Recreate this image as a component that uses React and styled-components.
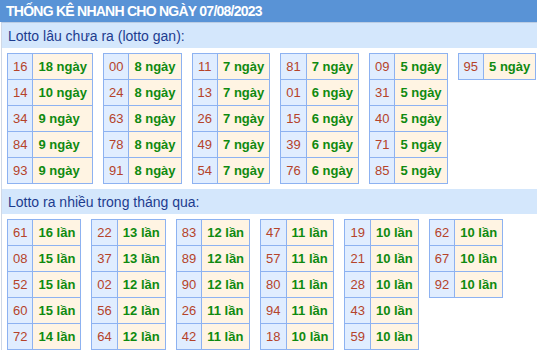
import React from 'react';
import styled, { createGlobalStyle } from 'styled-components';

const gan = [
  [['16', '18'], ['14', '10'], ['34', '9'], ['84', '9'], ['93', '9']],
  [['00', '8'], ['24', '8'], ['63', '8'], ['78', '8'], ['91', '8']],
  [['11', '7'], ['13', '7'], ['26', '7'], ['49', '7'], ['54', '7']],
  [['81', '7'], ['01', '6'], ['15', '6'], ['39', '6'], ['76', '6']],
  [['09', '5'], ['31', '5'], ['40', '5'], ['71', '5'], ['85', '5']],
  [['95', '5']],
];

const nhieu = [
  [['61', '16'], ['08', '15'], ['52', '15'], ['60', '15'], ['72', '14']],
  [['22', '13'], ['37', '13'], ['02', '12'], ['56', '12'], ['64', '12']],
  [['83', '12'], ['89', '12'], ['90', '12'], ['26', '11'], ['42', '11']],
  [['47', '11'], ['57', '11'], ['80', '11'], ['94', '11'], ['18', '10']],
  [['19', '10'], ['21', '10'], ['28', '10'], ['43', '10'], ['59', '10']],
  [['62', '10'], ['67', '10'], ['92', '10']],
];

const GlobalStyle = createGlobalStyle`
  body {
    margin: 0;
    background: #fff;
    font-family: "Liberation Sans", Arial, sans-serif;
  }
`;

const Title = styled.div`
  height: 22px;
  line-height: 22px;
  padding-left: 6px;
  background: #5993d6;
  color: #fff;
  font-size: 14px;
  font-weight: bold;
  letter-spacing: -0.75px;
  white-space: nowrap;
`;

const Content = styled.div`
  margin-left: 1px;
  border-left: 1px solid #cfd8e6;
  border-top: 1px solid #bccde3;
`;

const Heading = styled.div`
  height: 25px;
  line-height: 26px;
  margin-top: ${p => p.$gap || 0}px;
  padding-left: 6px;
  background: #d4e7fc;
  color: #1d3c8f;
  font-size: 14px;
`;

const Tables = styled.div`
  display: flex;
  align-items: flex-start;
  gap: 10px;
  padding: ${p => p.$top}px 0 0 5px;
`;

const Table = styled.table`
  border-collapse: collapse;
  font-size: 13px;
`;

const Num = styled.td`
  height: 25px;
  padding: 0 5px;
  border: 1px solid #8db2f1;
  background: #e0edff;
  color: #b5432a;
  text-align: center;
  line-height: 25px;
`;

const Val = styled.td`
  height: 25px;
  padding: 0 5px;
  border: 1px solid #8db2f1;
  background: #fff4e3;
  color: #0f8a10;
  font-weight: bold;
  line-height: 25px;
  white-space: nowrap;
`;

const Group = ({ rows, unit }) => (
  <Table>
    <tbody>
      {rows.map(([n, v]) => (
        <tr key={n}>
          <Num>{n}</Num>
          <Val>{v} {unit}</Val>
        </tr>
      ))}
    </tbody>
  </Table>
);

const App = () => (
  <>
    <GlobalStyle />
    <Title>THỐNG KÊ NHANH CHO NGÀY 07/08/2023</Title>
    <Content>
      <Heading>Lotto lâu chưa ra (lotto gan):</Heading>
      <Tables $top={5}>
        {gan.map((rows, i) => <Group key={i} rows={rows} unit="ngày" />)}
      </Tables>
      <Heading $gap={5}>Lotto ra nhiều trong tháng qua:</Heading>
      <Tables $top={5}>
        {nhieu.map((rows, i) => <Group key={i} rows={rows} unit="lần" />)}
      </Tables>
    </Content>
  </>
);

export default App;
